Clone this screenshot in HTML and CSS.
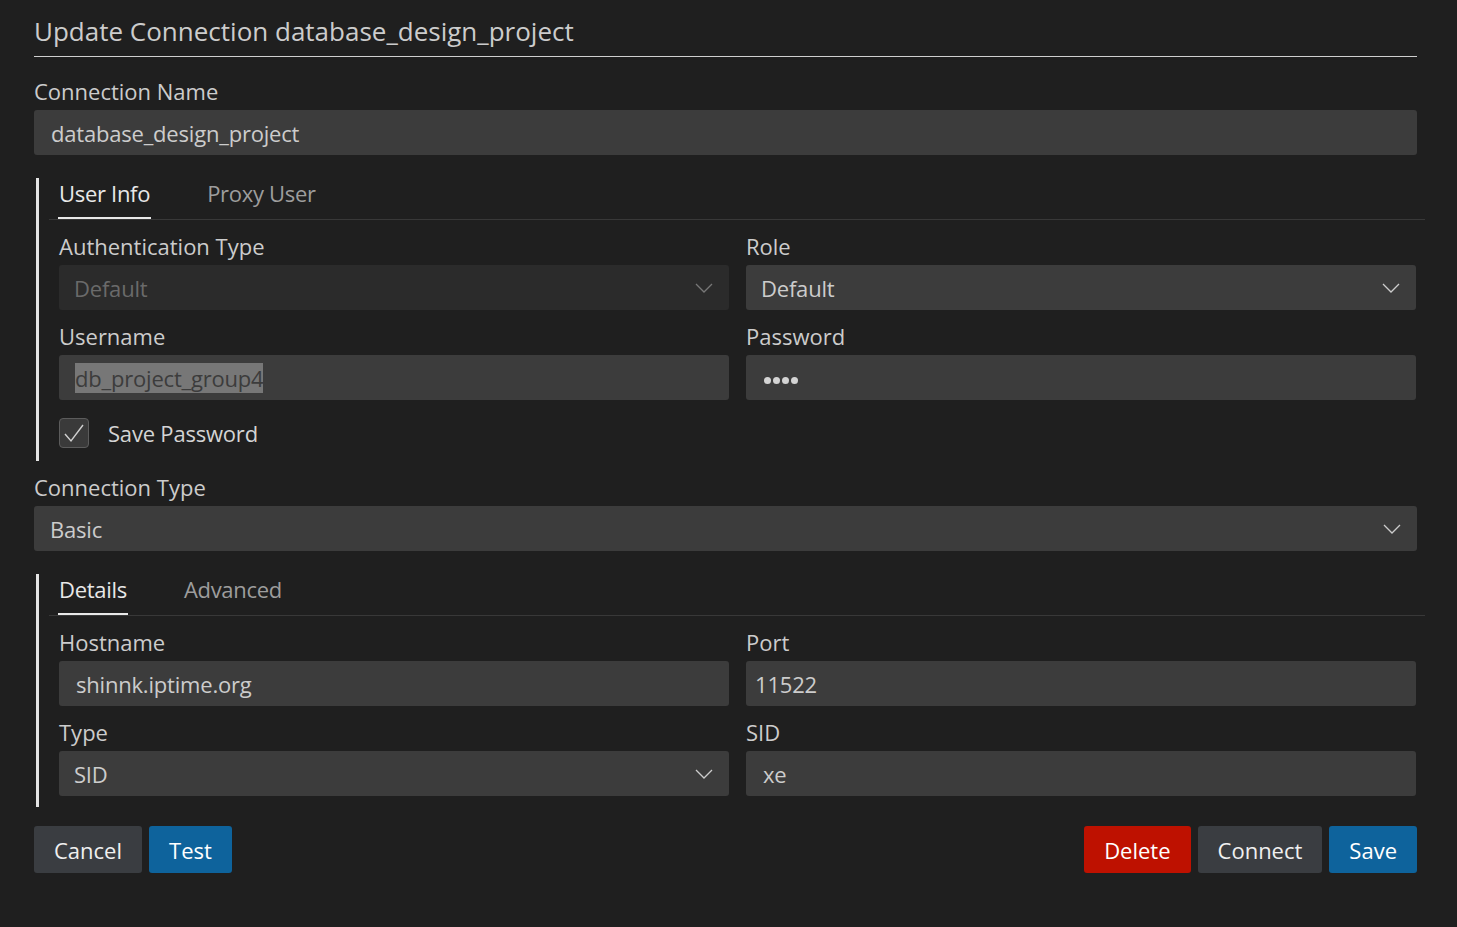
FILE: index.html
```html
<!DOCTYPE html>
<html>
<head>
<meta charset="utf-8">
<link rel="stylesheet" href="styles.css">
</head>
<body>
<div class="page">
  <h1 class="title">Update Connection database_design_project</h1>

  <div class="field">
    <label class="label">Connection Name</label>
    <div class="input">database_design_project</div>
  </div>

  <div class="section">
    <div class="tabs">
      <div class="tab active">User Info</div>
      <div class="tab">Proxy User</div>
    </div>
    <div class="panel panel-top">
      <div class="grid">
        <div class="field">
          <label class="label">Authentication Type</label>
          <div class="input select disabled"><span>Default</span>
            <svg class="chev" width="20" height="12" viewBox="0 0 20 12"><polyline points="2,2 10,10 18,2" fill="none" stroke="currentColor" stroke-width="1.3"/></svg>
          </div>
        </div>
        <div class="field">
          <label class="label">Role</label>
          <div class="input select"><span>Default</span>
            <svg class="chev" width="20" height="12" viewBox="0 0 20 12"><polyline points="2,2 10,10 18,2" fill="none" stroke="currentColor" stroke-width="1.3"/></svg>
          </div>
        </div>
        <div class="field">
          <label class="label">Username</label>
          <div class="input"><span class="selected">db_project_group4</span></div>
        </div>
        <div class="field">
          <label class="label">Password</label>
          <div class="input dots"><i></i><i></i><i></i><i></i></div>
        </div>
      </div>
      <div class="check-row">
        <div class="checkbox">
          <svg width="24" height="24" viewBox="0 0 24 24"><polyline points="3,13 9,20 21,4" fill="none" stroke="#d0d0d0" stroke-width="1.4"/></svg>
        </div>
        <span class="check-label">Save Password</span>
      </div>
    </div>
  </div>

  <div class="field">
    <label class="label">Connection Type</label>
    <div class="input select wide"><span>Basic</span>
      <svg class="chev" width="20" height="12" viewBox="0 0 20 12"><polyline points="2,2 10,10 18,2" fill="none" stroke="currentColor" stroke-width="1.3"/></svg>
    </div>
  </div>

  <div class="section">
    <div class="tabs">
      <div class="tab active">Details</div>
      <div class="tab">Advanced</div>
    </div>
    <div class="panel panel-bottom">
      <div class="grid">
        <div class="field">
          <label class="label">Hostname</label>
          <div class="input">shinnk.iptime.org</div>
        </div>
        <div class="field">
          <label class="label">Port</label>
          <div class="input tight">11522</div>
        </div>
        <div class="field">
          <label class="label">Type</label>
          <div class="input select"><span>SID</span>
            <svg class="chev" width="20" height="12" viewBox="0 0 20 12"><polyline points="2,2 10,10 18,2" fill="none" stroke="currentColor" stroke-width="1.3"/></svg>
          </div>
        </div>
        <div class="field">
          <label class="label">SID</label>
          <div class="input">xe</div>
        </div>
      </div>
    </div>
  </div>

  <div class="actions">
    <div class="group">
      <button class="btn secondary">Cancel</button>
      <button class="btn primary">Test</button>
    </div>
    <div class="group">
      <button class="btn danger">Delete</button>
      <button class="btn secondary">Connect</button>
      <button class="btn primary">Save</button>
    </div>
  </div>
</div>
</body>
</html>
```

FILE: styles.css
```css
* { box-sizing: border-box; }
html, body {
  margin: 0;
  padding: 0;
  background: #1f1f1f;
}
body {
  font-family: "Open Sans", "Noto Sans", sans-serif;
  color: #cccccc;
  font-size: 22px;
}
.page {
  padding: 14px 40px 0 34px;
  width: 1457px;
}
.title {
  margin: 0;
  font-size: 26px;
  font-weight: 400;
  line-height: 34px;
  padding-bottom: 8px;
  border-bottom: 1px solid #cfcfcf;
  color: #cccccc;
}
.page > .field:first-of-type {
  margin-top: 23px;
}
.label {
  display: block;
  line-height: 23px;
  margin-bottom: 7px;
}
.input {
  height: 45px;
  background: #3c3c3c;
  border-radius: 3px;
  padding: 0 17px;
  display: flex;
  align-items: center;
  color: #cccccc;
  letter-spacing: -0.2px;
  white-space: nowrap;
}
.input.tight { padding-left: 9px; }
.select {
  justify-content: space-between;
  padding: 0 15px 0 15px;
}
.select.wide { padding-left: 16px; }
.chev {
  color: #cccccc;
}
.select.disabled {
  background: #2b2b2b;
  color: #6a6a6a;
}
.select.disabled .chev { color: #777; }
.selected {
  background: #777777;
  color: #3c3c3c;
  line-height: 30px;
  margin-left: -1px;
}
.dots {
  gap: 2px;
  padding-left: 18px;
  padding-top: 5px;
}
.dots i {
  display: block;
  width: 7px;
  height: 7px;
  border-radius: 50%;
  background: #d4d4d4;
}
.section {
  margin: 23px -8px 0 2px;
  border-left: 3px solid #e4e4e4;
}
.section + .field { margin-top: 15px; }
.tabs {
  display: flex;
  gap: 55px;
  margin-left: 10px;
  padding-left: 9px;
  border-bottom: 1px solid #383838;
}
.tab {
  padding: 3px 1px 11px;
  line-height: 25px;
  border-bottom: 2px solid transparent;
  color: #9d9d9d;
  letter-spacing: -0.3px;
}
.tab.active {
  color: #e8e8e8;
  border-bottom-color: #e8e8e8;
}
.panel {
  padding: 15px 9px 11px 20px;
}
.panel-top { padding-bottom: 13px; }
.grid {
  display: grid;
  grid-template-columns: 1fr 1fr;
  column-gap: 17px;
  row-gap: 15px;
}
.check-row {
  display: flex;
  align-items: center;
  margin-top: 18px;
  gap: 19px;
}
.checkbox {
  width: 30px;
  height: 30px;
  border-radius: 4px;
  background: #3a3a3a;
  border: 1px solid #5c5c5c;
  display: flex;
  align-items: center;
  justify-content: center;
}
.check-label {
  color: #d4d4d4;
  letter-spacing: -0.2px;
}
.actions {
  display: flex;
  justify-content: space-between;
  margin-top: 19px;
}
.group {
  display: flex;
  gap: 7px;
}
.btn {
  height: 47px;
  border: none;
  border-radius: 3px;
  padding: 0 20px;
  font-family: inherit;
  font-size: 22px;
  color: #ffffff;
}
.btn.secondary { background: #3a3d41; color: #f0f0f0; }
.btn.primary { background: #0e639c; }
.btn.danger { background: #be1100; }
```
